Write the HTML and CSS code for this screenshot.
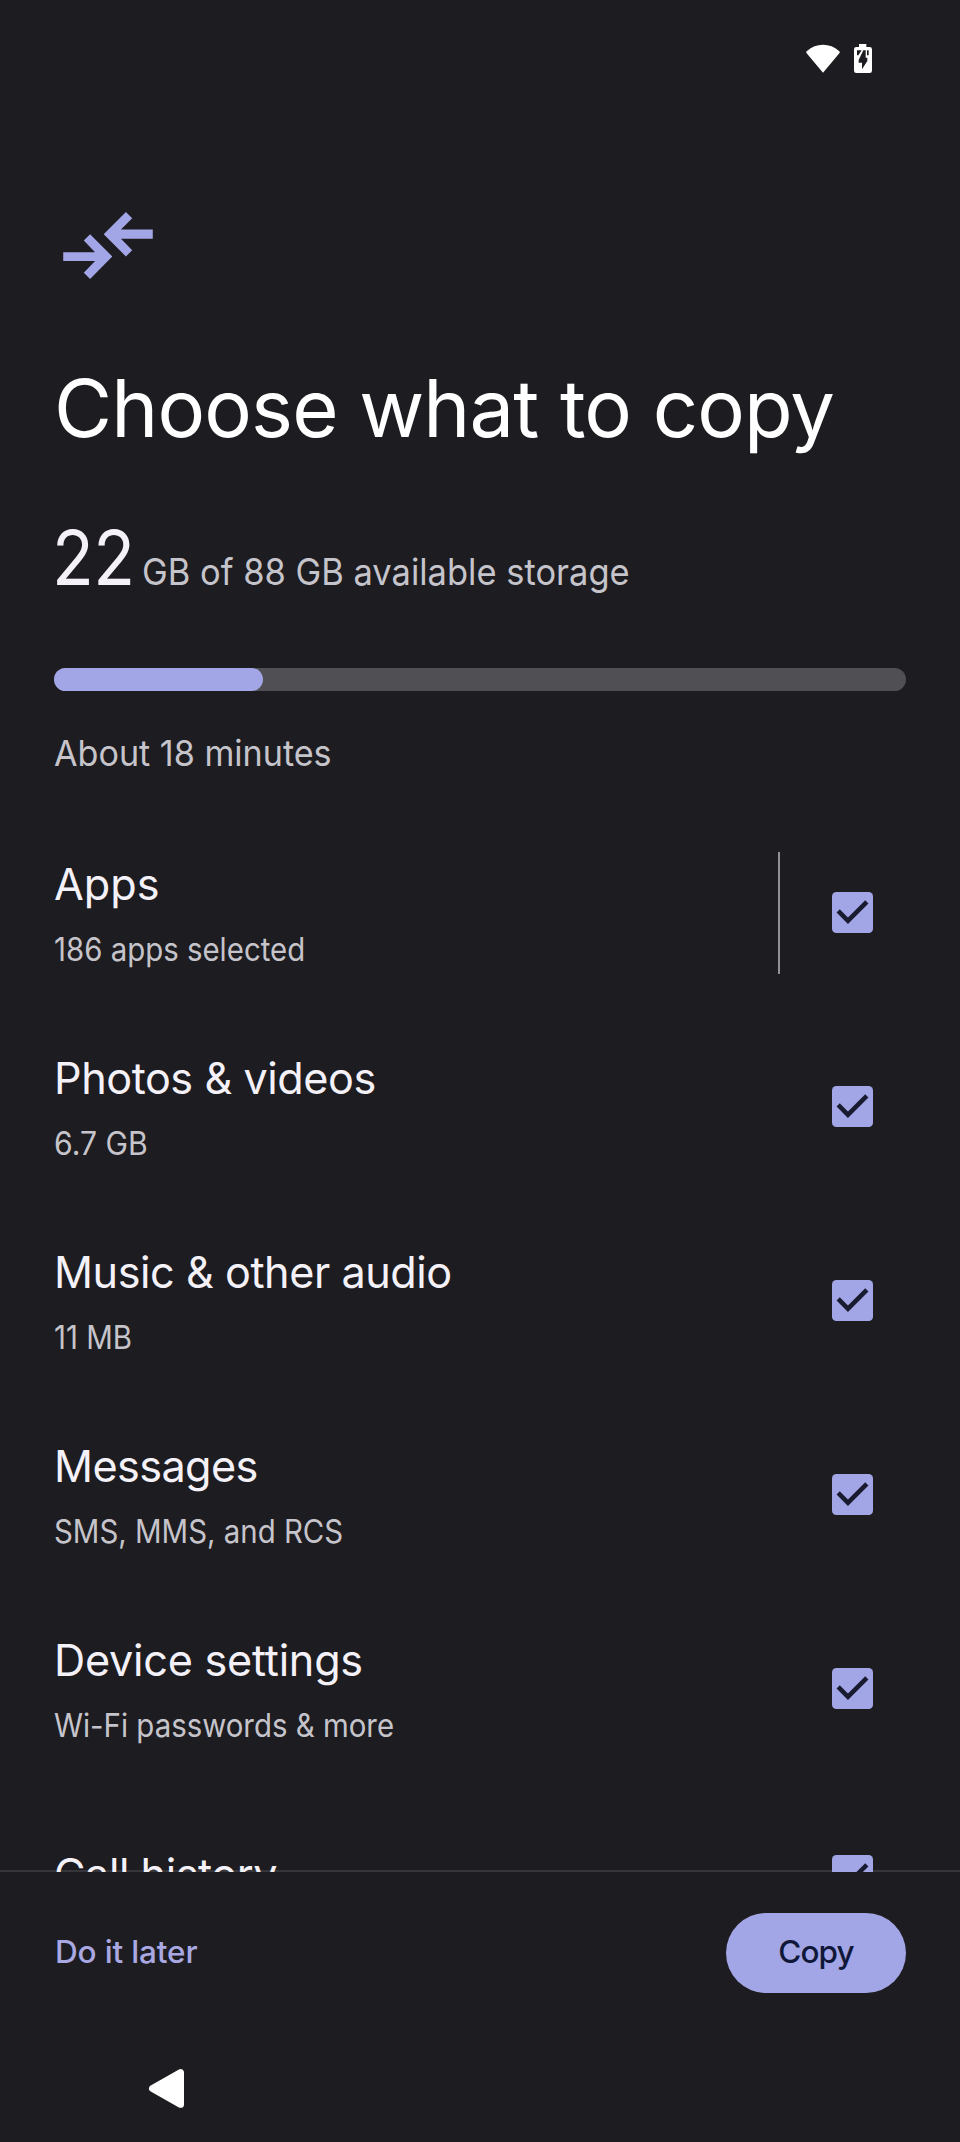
FILE: index.html
```
<!DOCTYPE html>
<html lang="en">
<head>
<meta charset="utf-8">
<title>Choose what to copy</title>
<link rel="stylesheet" href="styles.css">
</head>
<body>
<svg width="0" height="0" class="defs" aria-hidden="true">
  <symbol id="box" viewBox="3 3 18 18">
    <rect class="box-fill" x="3" y="3" width="18" height="18" rx="1.9"/>
    <path class="box-tick" d="M10 17l-5-5 1.41-1.41L10 14.17l7.59-7.59L19 8z"/>
  </symbol>
</svg>
<div class="screen">
  <header class="status">
    <svg class="wifi" viewBox="0 0 103 86"><path d="M51.500 86L2 27Q-1 23 3 20 24 1 51.500 1T100 20Q104 23 101 27Z"/></svg>
    <svg class="battery" viewBox="0 0 54 87">
      <path d="M15 0H37V9H47Q54 9 54 16V80Q54 87 47 87H7Q0 87 0 80V16Q0 9 7 9H15Z"/>
      <path class="cut" d="M9 19H23L13 34H9ZM28 19H35V41H40V51L24 76V56H14V48ZM39 19H44V34H39Z"/>
    </svg>
  </header>

  <main class="scroll">
    <svg class="merge" viewBox="69 65 270 202"><path d="M339 118H243L277 84 258 65 191 132 258 199 277 180 243 146H339ZM69 186H165L131 151 150 132 217 199 150 267 131 248 165 213H69Z"/></svg>
    <h1 class="title">Choose what to copy</h1>
    <p class="storage"><span class="used">22</span><span class="avail">GB of 88 GB available storage</span></p>
    <div class="track"><div class="fill"></div></div>
    <p class="eta">About 18 minutes</p>

    <ul class="list">
      <li class="row">
        <div class="text"><div class="name apps">Apps</div><div class="sub">186 apps selected</div></div>
        <span class="divider"></span>
        <svg class="check"><use href="#box"/></svg>
      </li>
      <li class="row">
        <div class="text"><div class="name">Photos &amp; videos</div><div class="sub size">6.7 GB</div></div>
        <svg class="check"><use href="#box"/></svg>
      </li>
      <li class="row">
        <div class="text"><div class="name">Music &amp; other audio</div><div class="sub">11 MB</div></div>
        <svg class="check"><use href="#box"/></svg>
      </li>
      <li class="row">
        <div class="text"><div class="name messages">Messages</div><div class="sub">SMS, MMS, and RCS</div></div>
        <svg class="check"><use href="#box"/></svg>
      </li>
      <li class="row">
        <div class="text"><div class="name settings">Device settings</div><div class="sub">Wi-Fi passwords &amp; more</div></div>
        <svg class="check"><use href="#box"/></svg>
      </li>
      <li class="row single">
        <div class="text"><div class="name">Call history</div></div>
        <svg class="check"><use href="#box"/></svg>
      </li>
    </ul>
  </main>

  <footer class="actions">
    <button class="later" type="button">Do it later</button>
    <button class="copy" type="button">Copy</button>
  </footer>
  <nav class="nav">
    <svg class="back" viewBox="0 0 103 114"><path d="M10 57L93 10V104Z"/></svg>
  </nav>
</div>
</body>
</html>
```
FILE: styles.css
```
* { box-sizing: border-box; }
body {
  margin: 0;
  background: #1d1c20;
  color: #f4f1f8;
  font-family: Inter, Roboto, sans-serif;
}
h1, p, ul { margin: 0; padding: 0; font-weight: 400; }
.defs { position: absolute; }
.screen {
  width: 960px;
  height: 2142px;
  display: flex;
  flex-direction: column;
  overflow: hidden;
}
.status {
  height: 120px;
  flex: none;
  display: flex;
  justify-content: flex-end;
  gap: 14px;
  padding: 44px 88px 0 0;
  fill: #fff;
}
.wifi { width: 34px; height: 29px; }
.battery { width: 18px; height: 29px; }
.cut { fill: #1d1c20; }

.scroll {
  height: 1752px;
  flex: none;
  overflow: hidden;
  padding: 92px 54px 0;
  box-shadow: inset 0 -2px #36353a;
}
.merge {
  display: block;
  width: 90px;
  height: 67px;
  margin-left: 9px;
  fill: #a3a6e6;
}
.title {
  margin-top: 81px;
  font-size: 79.5px;
  line-height: 96px;
  letter-spacing: -0.85px;
  white-space: nowrap;
  color: #fff;
}
.storage {
  display: flex;
  align-items: baseline;
  height: 90px;
  margin-top: 57px;
}
.used {
  width: 90px;
  margin-left: -2px;
  font-size: 75.3px;
  line-height: 90px;
  letter-spacing: -0.5px;
  transform: scaleX(0.91);
  transform-origin: 0 0;
}
.avail {
  font-size: 37px;
  line-height: 44px;
  color: #c6c4cb;
  white-space: nowrap;
  transform: scaleX(0.932);
  transform-origin: 0 0;
}
.track {
  height: 23px;
  margin-top: 65px;
  border-radius: 12px;
  background: #504f54;
}
.fill {
  width: 209px;
  height: 100%;
  border-radius: 12px;
  background: #a3a6e6;
}
.eta {
  margin-top: 41px;
  font-size: 35.6px;
  line-height: 44px;
  color: #c6c4cb;
  transform: scaleX(0.959);
  transform-origin: 0 0;
}
.list { margin-top: 40px; list-style: none; }
.row {
  display: flex;
  align-items: center;
  height: 194px;
  padding-right: 33px;
}
.text { flex: 1; padding-top: 1px; }
.name {
  font-size: 43.2px;
  line-height: 52px;
  letter-spacing: -0.45px;
}
.apps { letter-spacing: 0; }
.messages { letter-spacing: -0.6px; }
.settings { letter-spacing: -0.25px; }
.sub {
  margin: 20px 0 -1px;
  font-size: 31.9px;
  line-height: 40px;
  color: #c6c4cb;
  transform: scaleX(0.922);
  transform-origin: 0 0;
}
.size { transform: scaleX(0.945); }
.divider {
  width: 2px;
  height: 122px;
  margin-right: 52px;
  background: #929196;
}
.check { width: 41px; height: 41px; margin-bottom: 1px; }
.box-fill { fill: #a3a6e6; }
.box-tick { fill: #191c30; }
.single { height: 179px; }
.single .text { padding: 0 0 4px; }

.actions {
  height: 121px;
  flex: none;
  display: flex;
  justify-content: space-between;
  align-items: flex-end;
  padding: 0 54px;
}
button {
  height: 80px;
  padding: 0 0 2px;
  border: 0;
  font: 500 31.5px/78px Inter, Roboto, sans-serif;
}
.later {
  padding-left: 1px;
  background: none;
  color: #a9a8e2;
  letter-spacing: -0.15px;
}
.copy {
  width: 180px;
  border-radius: 40px;
  background: #a3a6e6;
  color: #10183a;
  letter-spacing: -0.9px;
}
.nav { padding: 76px 0 0 149px; }
.back {
  display: block;
  width: 35px;
  height: 39px;
  fill: #fff;
  stroke: #fff;
  stroke-width: 20px;
  stroke-linejoin: round;
  overflow: visible;
}
```
